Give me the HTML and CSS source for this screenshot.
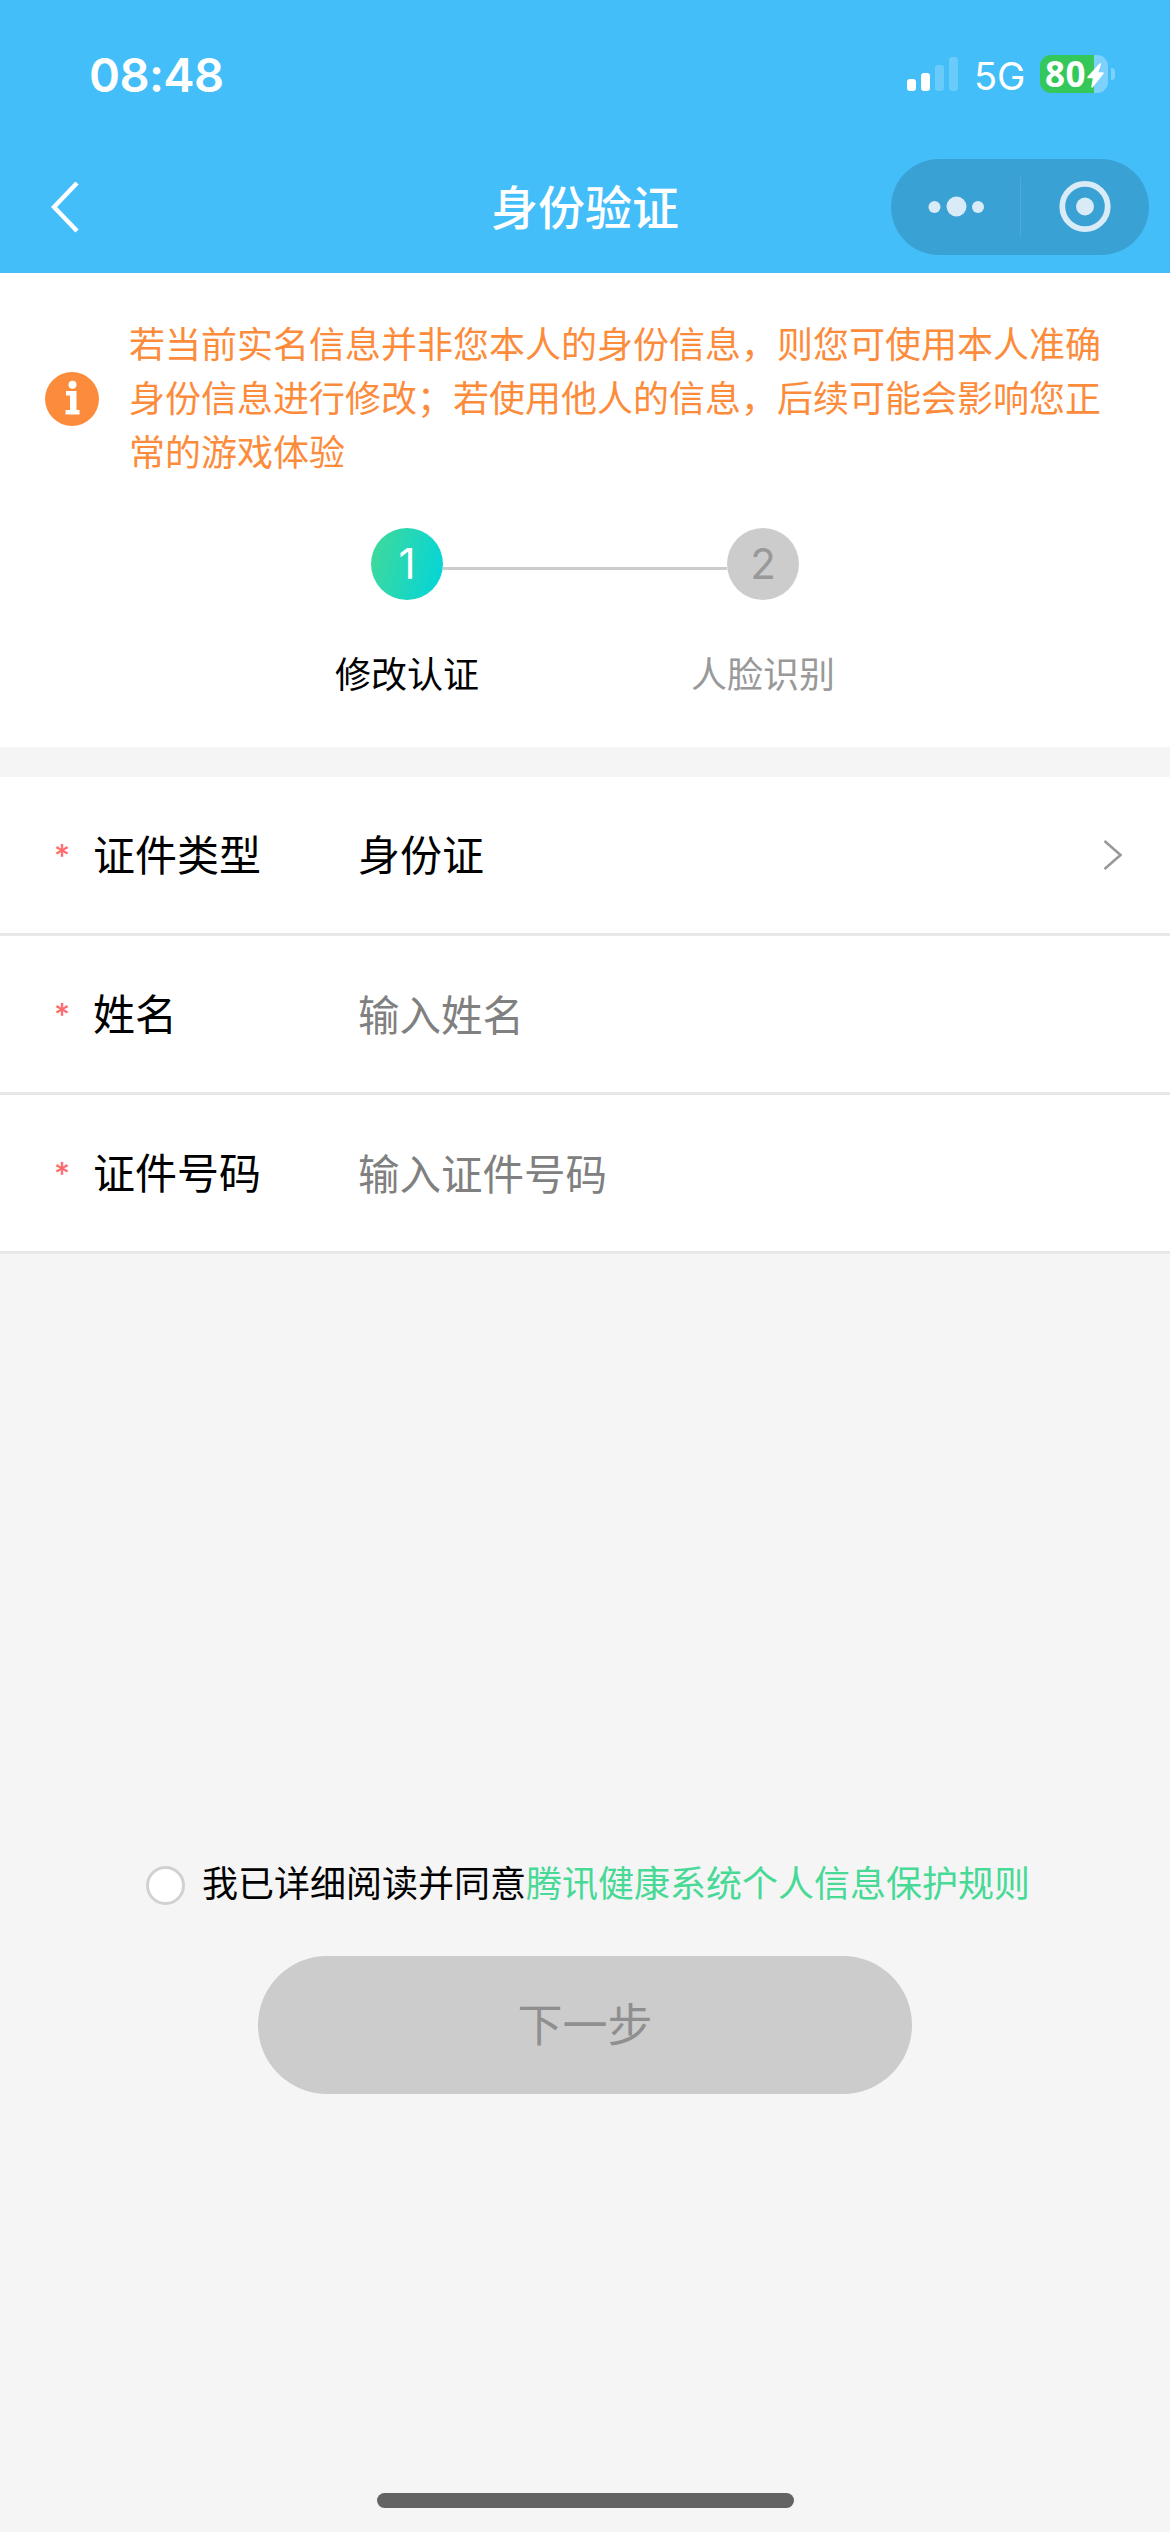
FILE: index.html
```html
<!DOCTYPE html>
<html lang="zh-CN">
<head>
<meta charset="utf-8">
<title>身份验证</title>
<link rel="stylesheet" href="styles.css">
</head>
<body>
<header class="header">
  <div class="status">
    <span class="time">08:48</span>
    <div class="status-right">
      <svg class="signal" width="51" height="34" viewBox="0 0 51 34" fill="#fff">
        <rect y="22" width="9" height="12" rx="3"/>
        <rect x="14" y="16" width="9" height="18" rx="3"/>
        <rect x="28" y="8" width="9" height="26" rx="3" opacity=".2"/>
        <rect x="42" width="9" height="34" rx="3" opacity=".2"/>
      </svg>
      <span class="network">5G</span>
      <div class="battery">
        <span class="level">80</span>
        <svg class="bolt" width="17" height="25" viewBox="0 0 17 25"><path d="M12.500.5.700 13.500c-.8.900-.4 1.800.7 1.800h4.400L4.300 23.500c-.2 1.200.8 1.500 1.500.7L16.400 11c.7-.9.3-1.700-.7-1.700h-4.400l2.700-7.800c.3-1.200-.7-1.800-1.500-1z" fill="#fff"/></svg>
      </div>
      <span class="battery-cap"></span>
    </div>
  </div>
  <nav class="nav">
    <svg class="back" width="28" height="52" viewBox="0 0 28 52" fill="none" stroke="#fff" stroke-width="4.500"><path d="M26 2 3 26l23 24"/></svg>
    <h1 class="title">身份验证</h1>
    <div class="capsule">
      <svg width="258" height="96" viewBox="0 0 258 96" fill="#d8ebf6">
        <circle cx="43.500" cy="48" r="6"/><circle cx="65.500" cy="47.500" r="10"/><circle cx="87" cy="48" r="6"/>
        <rect x="129" y="18" width="1" height="60" opacity=".13"/>
        <circle cx="194" cy="47.500" r="9"/>
        <circle cx="194" cy="47.500" r="22.700" fill="none" stroke="#d8ebf6" stroke-width="5.800"/>
      </svg>
    </div>
  </nav>
</header>

<section class="intro">
  <div class="notice">
    <svg class="info" width="54" height="54" viewBox="0 0 54 54"><circle cx="27" cy="27" r="27" fill="#fc8c3c"/><circle cx="27.500" cy="12.800" r="4" fill="#fff"/><path d="M21 19h10.500v19H34.500v4.500h-14V38H25V23.500h-4z" fill="#fff"/></svg>
    <p class="notice-text">若当前实名信息并非您本人的身份信息，则您可使用本人准确身份信息进行修改；若使用他人的信息，后续可能会影响您正常的游戏体验</p>
  </div>
  <div class="steps">
    <div class="step active"><span class="num">1</span><span class="step-label">修改认证</span></div>
    <div class="step-line"></div>
    <div class="step"><span class="num">2</span><span class="step-label">人脸识别</span></div>
  </div>
</section>

<section class="form">
  <div class="row">
    <span class="req">*</span><span class="label">证件类型</span><span class="value">身份证</span>
    <svg class="more" width="18" height="30" viewBox="0 0 18 30" fill="none" stroke="#999" stroke-width="2.600"><path d="M.5 1 16.500 15 .5 29"/></svg>
  </div>
  <div class="row"><span class="req">*</span><span class="label">姓名</span><span class="value hint">输入姓名</span></div>
  <div class="row"><span class="req">*</span><span class="label">证件号码</span><span class="value hint">输入证件号码</span></div>
</section>

<footer class="footer">
  <div class="agree"><span class="check"></span><span>我已详细阅读并同意<span class="link">腾讯健康系统个人信息保护规则</span></span></div>
  <button class="next" type="button">下一步</button>
  <div class="home"></div>
</footer>
</body>
</html>
```
FILE: styles.css
```css
* { box-sizing: border-box; margin: 0; padding: 0; }
body {
  width: 1170px;
  height: 2532px;
  display: flex;
  flex-direction: column;
  background: #f5f5f5;
  color: #000;
  font-family: "Noto Sans CJK SC", sans-serif;
  font-size: 36px;
}
svg { display: block; flex: none; }

.header { height: 273px; background: #43bef9; color: #fff; }
.status {
  height: 159px;
  padding: 45px 55px 0 89px;
  display: flex;
  justify-content: space-between;
  align-items: flex-start;
  font-family: Inter, sans-serif;
}
.time { font-size: 47px; line-height: 60px; font-weight: 600; letter-spacing: -0.6px; }
.status-right { display: flex; align-items: center; height: 58px; }
.network { margin-left: 16px; width: 66px; font-size: 38px; line-height: 58px; padding-top: 3px; }
.battery {
  width: 68px;
  height: 38px;
  border-radius: 11px;
  padding-left: 5px;
  display: flex;
  align-items: center;
  background: linear-gradient(90deg, #34c759 54px, #7dd1fb 54px);
}
.level { width: 42px; font: 700 35px/38px "Noto Sans", sans-serif; letter-spacing: 0.5px; }
.bolt { margin-top: 2px; }
.battery-cap { margin-left: 3px; width: 4px; height: 12px; border-radius: 0 6px 6px 0; background: #7dd1fb; }

.nav {
  height: 96px;
  padding: 0 21px 0 51px;
  display: grid;
  grid-template-columns: 258px 1fr 258px;
  align-items: center;
}
.title { font-size: 47px; line-height: 60px; font-weight: 500; text-align: center; margin: 0 30px 5px 0; }
.capsule { height: 96px; border-radius: 48px; background: #3aa1d4; }

.intro { height: 474px; background: #fff; }
.notice {
  padding: 42px 69px 0 45px;
  display: flex;
  align-items: center;
  gap: 30px;
  color: #fc8c3c;
}
.info { margin-top: 6px; }
.notice-text { flex: 1; line-height: 54px; }
.steps { margin-top: 51px; display: flex; justify-content: center; }
.step { width: 72px; display: flex; flex-direction: column; align-items: center; color: #999; }
.num {
  width: 72px;
  height: 72px;
  border-radius: 50%;
  background: #ccc;
  text-align: center;
  font: 400 42px/72px Inter, sans-serif;
}
.step-label { margin-top: 45px; line-height: 54px; white-space: nowrap; }
.active { color: #000; }
.active .num { background: linear-gradient(105deg, #43d997 0%, #00d5dc 100%); color: #fff; }
.step-line { width: 284px; height: 3px; margin-top: 39px; background: #ccc; }

.form { margin-top: 30px; background: #fff; }
.row {
  height: 159px;
  padding: 0 48px 0 54px;
  display: flex;
  align-items: center;
  border-bottom: 3px solid #e8e8e8;
  font-size: 42px;
}
.req { width: 39px; color: #ff6b6b; font: 500 31px/40px Inter, sans-serif; padding-top: 2px; }
.label { width: 265px; padding-bottom: 5px; }
.value { flex: 1; padding-bottom: 5px; }
.hint { color: #808080; font-size: 41.500px; padding-bottom: 2px; }

.footer { flex: 1; padding-top: 600px; display: flex; flex-direction: column; align-items: center; }
.agree { display: flex; align-items: center; gap: 17px; line-height: 54px; margin-left: 6px; }
.check { width: 39px; height: 39px; margin-top: 8px; border: 3px solid #d1d1d1; border-radius: 50%; background: #fff; }
.link { color: #47d995; }
.next {
  margin-top: 48px;
  width: 654px;
  height: 138px;
  border: 0;
  border-radius: 69px;
  background: #ccc;
  color: #8f8f8f;
  font: 400 45px/60px "Noto Sans CJK SC", sans-serif;
  padding-bottom: 5px;
}
.home { margin: auto 0 24px; width: 417px; height: 15px; border-radius: 8px; background: #636363; }
```
